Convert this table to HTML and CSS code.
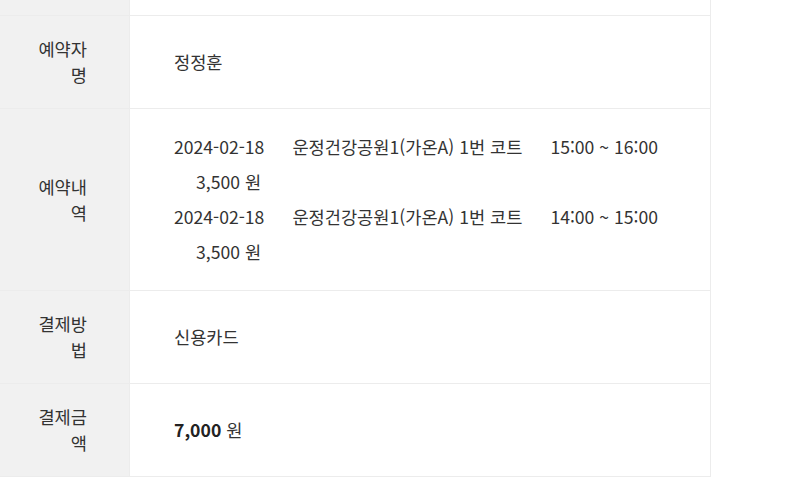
FILE: index.html
```html
<!DOCTYPE html>
<html lang="ko">
<head>
<meta charset="utf-8">
<link rel="stylesheet" href="styles.css">
</head>
<body>
<div class="info">
  <div class="th cut"></div>
  <div class="td cut"></div>

  <div class="th">예약자명</div>
  <div class="td">정정훈</div>

  <div class="th">예약내역</div>
  <div class="td list">
    <div class="entry">
      <span>2024-02-18</span>
      <span>운정건강공원1(가온A) 1번 코트</span>
      <span>15:00 ~ 16:00</span>
      <span class="price">3,500 원</span>
    </div>
    <div class="entry">
      <span>2024-02-18</span>
      <span>운정건강공원1(가온A) 1번 코트</span>
      <span>14:00 ~ 15:00</span>
      <span class="price">3,500 원</span>
    </div>
  </div>

  <div class="th">결제방법</div>
  <div class="td">신용카드</div>

  <div class="th">결제금액</div>
  <div class="td"><strong class="total">7,000</strong>&nbsp;원</div>
</div>
</body>
</html>
```
FILE: styles.css
```css
html, body {
  margin: 0;
  padding: 0;
  background: #fff;
}
body {
  font-family: "Noto Sans CJK KR", "Noto Sans", sans-serif;
  font-size: 17.6px;
  color: #333;
}
.info {
  display: grid;
  grid-template-columns: 130px 581px;
  width: 711px;
}
.th,
.td {
  border-bottom: 1px solid #ececec;
  display: flex;
  align-items: center;
}
.th {
  box-sizing: border-box;
  padding: 20px 42px 20px 30px;
  background: #f1f1f1;
  text-align: right;
  justify-content: flex-end;
  line-height: 26px;
  border-right: 1px solid #ececec;
}
.td {
  box-sizing: border-box;
  padding: 20px 20px 20px 44px;
  line-height: 26px;
  border-right: 1px solid #ececec;
}
.cut {
  height: 16px;
  padding: 0;
}
.td.list {
  display: block;
  padding-top: 20px;
  padding-bottom: 21px;
  line-height: 35px;
}
.entry {
  display: flex;
  flex-wrap: wrap;
  column-gap: 28px;
}
.entry .price {
  margin-left: 22px;
}
.total {
  font-weight: 700;
  color: #222;
}
```
